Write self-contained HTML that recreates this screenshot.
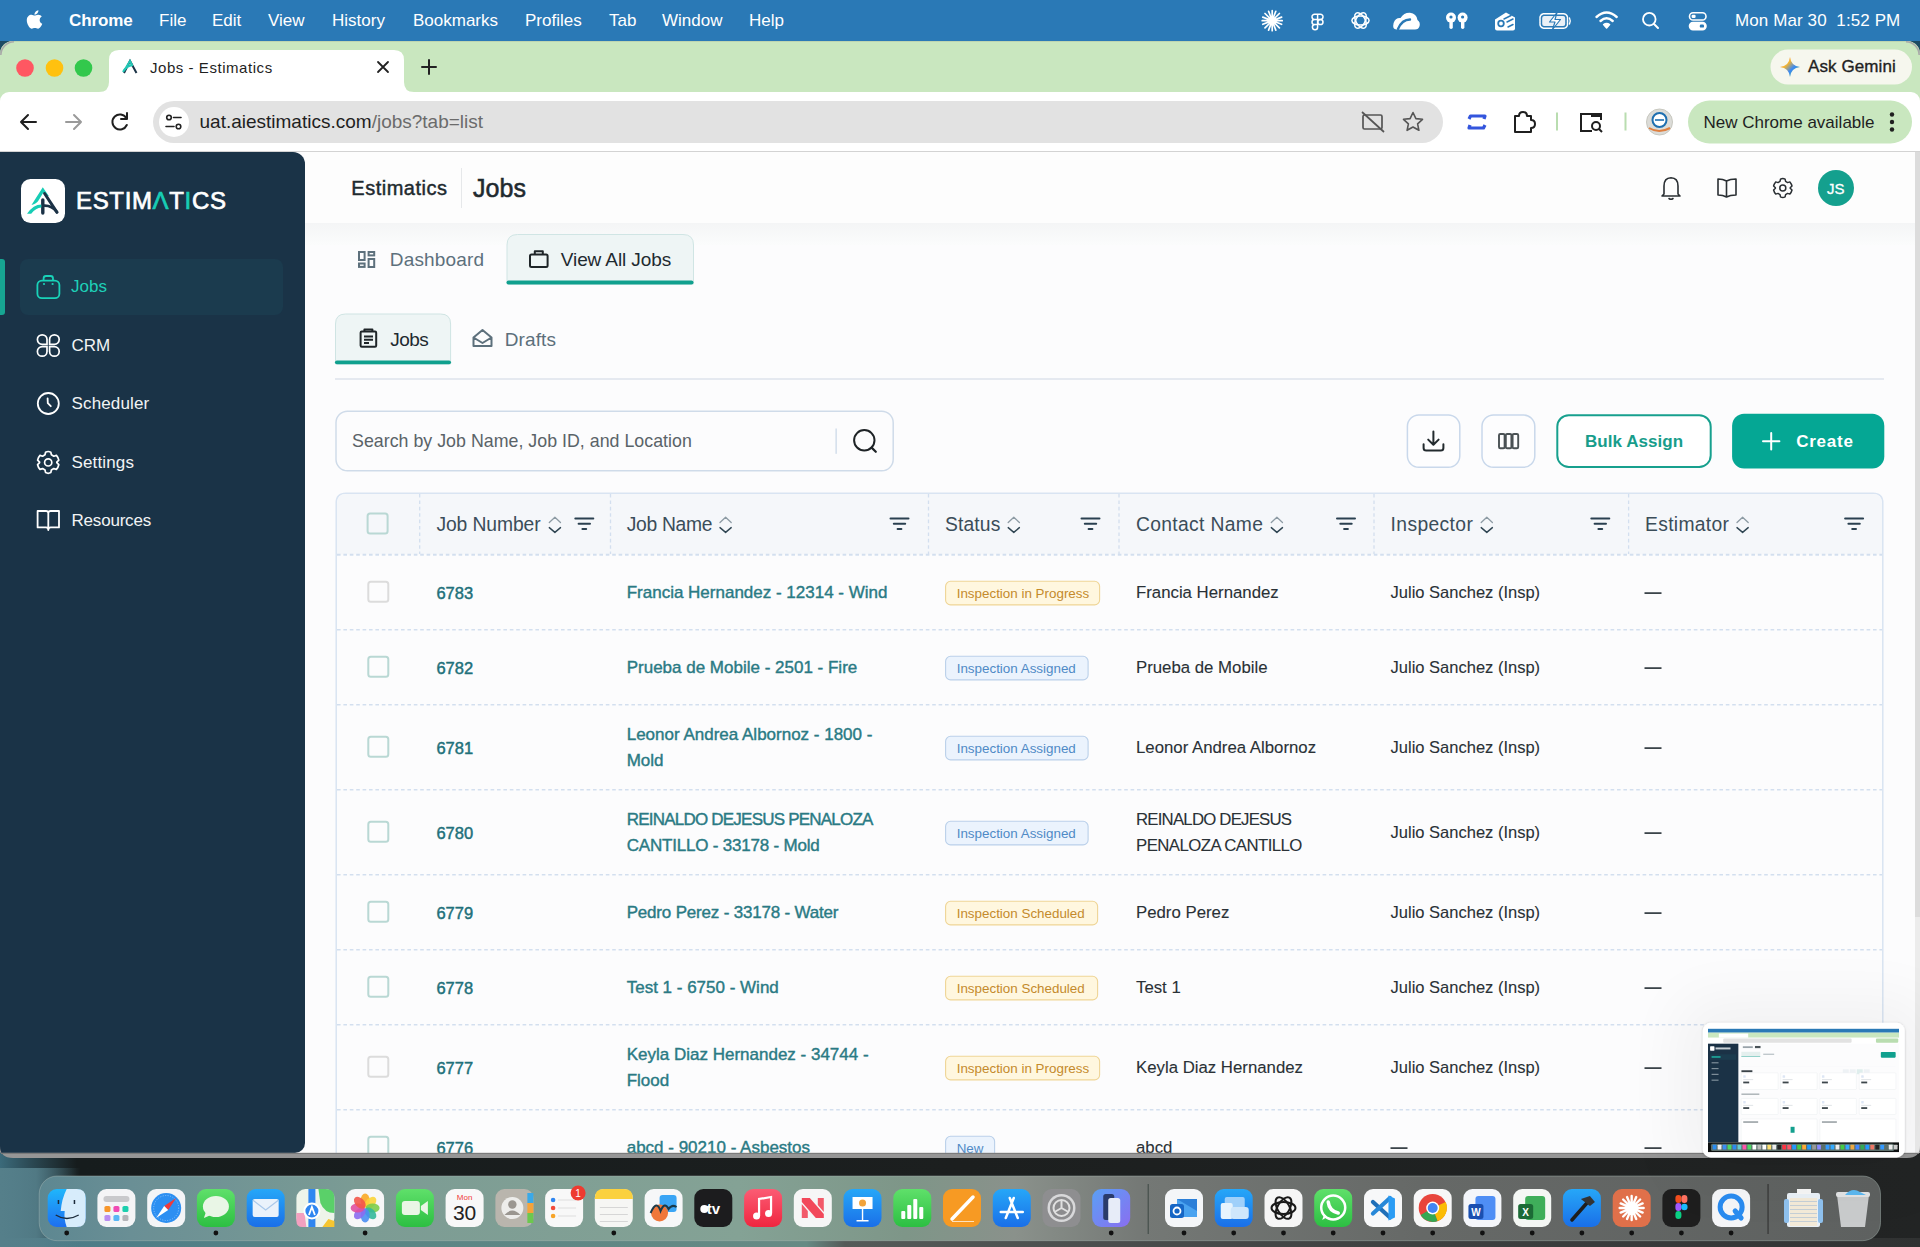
<!DOCTYPE html>
<html><head><meta charset="utf-8">
<style>
*{box-sizing:border-box;margin:0;padding:0}
html,body{width:1920px;height:1247px;overflow:hidden}
body{position:relative;font-family:"Liberation Sans",sans-serif;background:#1d4a63}
.a{position:absolute}
.t{position:absolute;white-space:nowrap;line-height:1}
svg.i{position:absolute;overflow:visible}
#desk{left:0;top:1060px;width:1920px;height:187px;background:linear-gradient(90deg,#4a7785 0%,#557d86 8%,#466f78 22%,#34494c 40%,#2b3132 55%,#232828 75%,#1d2121 100%)}
#menubar{left:0;top:0;width:1920px;height:41px;background:#2a79b6}
#menubar .t{font-size:17px;top:12px;color:#fff}
#winframe{left:0;top:92px;width:1920px;height:10px;background:#c9e7bf}
#tabstrip{left:0;top:41px;width:1920px;height:51px;background:#c9e7bf;border-radius:13px 13px 0 0;box-shadow:inset 0 1px 0 #bdd5b1}
#toolbar{left:0;top:92px;width:1920px;height:60px;background:#fff;border-bottom:1px solid #d3d3d3;border-radius:9px 9px 0 0}
#page{left:0;top:152px;width:1920px;height:1001px;background:#fcfcfd}
#sidebar{left:0;top:152px;width:305px;height:1001px;background:#1a3347;border-radius:0 12px 10px 0}
</style></head><body>
<!-- MENUBAR -->
<div id="menubar" class="a">
  <svg class="i" style="left:26px;top:9px" width="17" height="21" viewBox="0 0 384 512"><path fill="#fff" d="M318.7 268.7c-.2-36.7 16.4-64.4 50-84.8-18.8-26.9-47.2-41.7-84.7-44.6-35.5-2.8-74.3 20.7-88.5 20.7-15 0-49.4-19.7-76.4-19.7C63.3 141.2 4 184.8 4 273.5q0 39.3 14.4 81.2c12.8 36.7 59 126.7 107.2 125.2 25.2-.6 43-17.9 75.8-17.9 31.8 0 48.3 17.9 76.4 17.9 48.6-.7 90.4-82.5 102.6-119.3-65.2-30.7-61.7-90-61.7-91.9zm-56.6-164.2c27.3-32.4 24.8-61.9 24-72.5-24.1 1.4-52 16.4-67.9 34.9-17.5 19.8-27.8 44.3-25.6 71.9 26.1 2 49.9-11.4 69.5-34.3z"/></svg>
  <span class="t" style="left:69px;font-weight:bold;letter-spacing:-0.1px">Chrome</span>
  <span class="t" style="left:159px">File</span>
  <span class="t" style="left:212px">Edit</span>
  <span class="t" style="left:268px">View</span>
  <span class="t" style="left:332px">History</span>
  <span class="t" style="left:413px">Bookmarks</span>
  <span class="t" style="left:525px">Profiles</span>
  <span class="t" style="left:609px">Tab</span>
  <span class="t" style="left:662px">Window</span>
  <span class="t" style="left:749px">Help</span>
  <span class="t" style="left:1735px;letter-spacing:0.1px">Mon Mar 30&nbsp; 1:52 PM</span>
  <svg class="i" style="left:0;top:0" width="1920" height="41" fill="none" stroke="#fff" stroke-linecap="round">
    <g stroke-width="1.7" transform="translate(1272.2 20.7)">
      <path d="M0 -10 L0 10 M-10 0 L10 0 M-7.2 -7.2 L7.2 7.2 M-7.2 7.2 L7.2 -7.2 M-3.6 -9.4 L3.6 9.4 M-9.4 -3.6 L9.4 3.6 M-9.4 3.6 L9.4 -3.6 M-3.6 9.4 L3.6 -9.4"/>
    </g>
    <circle cx="1272.2" cy="20.7" r="2.5" fill="#fff" stroke="none"/>
    <g stroke-width="1.5">
      <path d="M1314.6 14.2 h3 v5.2 h-3 a2.6 2.6 0 0 1 0 -5.2 z M1317.6 14.2 h2.8 a2.6 2.6 0 0 1 0 5.2 h-2.8 z M1314.6 19.4 h3 v5.2 h-3 a2.6 2.6 0 0 1 0 -5.2 z M1314.6 24.6 h3 v2.6 a2.6 2.6 0 1 1 -3 -2.6 z"/>
      <circle cx="1320.4" cy="22" r="2.6"/>
    </g>
    <g transform="translate(1360.5 20.5)" stroke-width="1.5">
      <ellipse rx="8.6" ry="4.6"/><ellipse rx="8.6" ry="4.6" transform="rotate(60)"/><ellipse rx="8.6" ry="4.6" transform="rotate(120)"/>
    </g>
    <path d="M1396.5 29.5 Q1392 29.5 1393.6 23 Q1395.5 17.5 1400.5 18 Q1404 12.5 1410 12.8 Q1416.5 13.5 1417.5 20 Q1420.5 22 1419.6 26 Q1418.6 29.5 1415 29.5 Z" fill="#fff" stroke="none"/>
    <path d="M1398 29 Q1402 19.5 1410 19.5" stroke="#2a79b6" stroke-width="2.4"/>
    <g fill="#fff" stroke="none"><circle cx="1451" cy="17.6" r="5"/><rect x="1449.4" y="19" width="3.4" height="10" rx="1.7"/><circle cx="1462.6" cy="17.6" r="5"/><rect x="1461" y="19" width="3.4" height="10" rx="1.7"/></g>
    <circle cx="1451" cy="17" r="1.6" fill="#2a79b6" stroke="none"/><circle cx="1462.6" cy="17" r="1.6" fill="#2a79b6" stroke="none"/>
    <path d="M1495 19.5 L1506 12.5 L1515 17.5 L1515 28.5 Q1515 30.5 1513 30.5 L1497 30.5 Q1495 30.5 1495 28.5 Z" fill="#fff" stroke="none"/>
    <circle cx="1501" cy="23.5" r="2.8" stroke="#2a79b6" stroke-width="1.8"/>
    <path d="M1504 19 L1511 15.5 M1507 22 L1513 19 M1508 27 L1513 24.5" stroke="#2a79b6" stroke-width="1.5"/>
    <rect x="1540" y="13.8" width="27.5" height="14.4" rx="4" stroke-width="1.5" stroke-dasharray="2.2 0.6"/>
    <rect x="1542.2" y="16" width="23" height="10" rx="2" fill="#eaf0f6" stroke="none"/>
    <path d="M1557 12.5 L1549.5 22 L1555 22 L1552.5 29.5 L1560.5 19.5 L1555 19.5 Z" fill="#fff" stroke="#2a79b6" stroke-width="1.2" stroke-linejoin="round"/>
    <path d="M1569.5 18 Q1571 21 1569.5 24" stroke-width="1.4"/>
    <g stroke-width="2.4">
      <path d="M1596.5 17 Q1606.6 8 1616.7 17"/><path d="M1600.5 21 Q1606.6 15.5 1612.7 21"/>
    </g>
    <path d="M1603.6 24.6 Q1606.6 22.4 1609.6 24.6 L1606.6 28 Z" fill="#fff" stroke="#fff" stroke-width="1.5" stroke-linejoin="round"/>
    <circle cx="1649.3" cy="19.2" r="6.3" stroke-width="1.8"/><path d="M1654 24 L1658 28" stroke-width="2"/>
    <rect x="1689.5" y="12.8" width="16.5" height="7.2" rx="3.6" stroke-width="1.6"/><rect x="1691.6" y="14.8" width="4" height="3.2" rx="1.2" fill="#fff" stroke="none"/>
    <rect x="1689.5" y="22.6" width="16.5" height="7" rx="3.5" fill="#fff" stroke-width="1.6"/><rect x="1699.8" y="24.6" width="4.2" height="3" rx="1.2" fill="#2a79b6" stroke="none"/>
  </svg>
</div>
<!-- WINDOW -->
<div id="winframe" class="a"></div>
<div id="tabstrip" class="a"></div>
<div id="toolbar" class="a"></div>
<div id="page" class="a"></div>
<svg class="i" style="left:0;top:0" width="1920" height="60"><path d="M0.8 55 A13.5 13.5 0 0 1 14 41.8" fill="none" stroke="#a9a9a9" stroke-width="1.6"/><path d="M1906 41.8 A13.5 13.5 0 0 1 1919.2 55" fill="none" stroke="#a9a9a9" stroke-width="1.6"/></svg>
<div id="sidebar" class="a"></div>
<svg class="i" style="left:0;top:0" width="1920" height="160">
  <circle cx="25" cy="68" r="8.8" fill="#ff5762"/>
  <circle cx="54.5" cy="68" r="8.8" fill="#ffc10f"/>
  <circle cx="83.5" cy="68" r="8.8" fill="#32c84c"/>
  <path d="M99 92 Q109 92 109 82 L109 60 Q109 50 119 50 L394 50 Q404 50 404 60 L404 82 Q404 92 414 92 Z" fill="#fff"/>
  <!-- favicon -->
  <path d="M124 73 L130 61 L136.5 73" fill="none" stroke="#1b3246" stroke-width="2"/>
  <path d="M123 72 Q126 66 133 65" fill="none" stroke="#22c7b5" stroke-width="2"/>
  <path d="M124.5 70 L130 61 L132 65" fill="none" stroke="#22c7b5" stroke-width="2"/>
  <!-- close x -->
  <path d="M378 62 L388 72 M388 62 L378 72" stroke="#222" stroke-width="1.8" stroke-linecap="round"/>
  <!-- plus -->
  <path d="M429 60 L429 74 M422 67 L436 67" stroke="#222" stroke-width="2" stroke-linecap="round"/>
  <!-- gemini pill -->
  <rect x="1770.5" y="49.5" width="141.5" height="35" rx="17.5" fill="#f6f7ee"/>
  <defs><linearGradient id="gem" x1="0" y1="0" x2="1" y2="1"><stop offset="0" stop-color="#f25a3a"/><stop offset="0.35" stop-color="#f7b52c"/><stop offset="0.6" stop-color="#3c8af5"/><stop offset="1" stop-color="#37b34a"/></linearGradient></defs>
  <path d="M1790 57 Q1791 66 1800 67 Q1791 68 1790 77 Q1789 68 1780 67 Q1789 66 1790 57Z" fill="url(#gem)"/>
  <!-- toolbar -->
  <path d="M21 122 L36 122 M28 115 L21 122 L28 129" fill="none" stroke="#1f1f1f" stroke-width="2" stroke-linecap="round" stroke-linejoin="round"/>
  <path d="M66 122 L81 122 M74 115 L81 122 L74 129" fill="none" stroke="#9a9a9a" stroke-width="2" stroke-linecap="round" stroke-linejoin="round"/>
  <path d="M126.3 118 A7.5 7.5 0 1 0 126.8 125" fill="none" stroke="#1f1f1f" stroke-width="2" stroke-linecap="round"/>
  <path d="M127 113 L127 119 L121 119" fill="none" stroke="#1f1f1f" stroke-width="2" stroke-linecap="round" stroke-linejoin="round"/>
  <rect x="153" y="101" width="1290" height="42" rx="21" fill="#e2e2e2"/>
  <circle cx="174" cy="122" r="15" fill="#fff"/>
  <circle cx="169" cy="117.5" r="2.3" fill="none" stroke="#222" stroke-width="1.6"/>
  <path d="M173.5 117.5 L181 117.5 M166 126.5 L174 126.5" stroke="#222" stroke-width="1.6" stroke-linecap="round"/>
  <circle cx="178.5" cy="126.5" r="2.3" fill="none" stroke="#222" stroke-width="1.6"/>
  <!-- camera off -->
  <rect x="1363" y="115" width="19" height="14" rx="1.5" fill="none" stroke="#555" stroke-width="1.7"/>
  <path d="M1362 112 L1384 132" stroke="#555" stroke-width="1.7"/>
  <!-- star -->
  <path d="M1413 112.5 L1415.9 118.6 L1422.5 119.3 L1417.6 123.8 L1418.9 130.3 L1413 127 L1407.1 130.3 L1408.4 123.8 L1403.5 119.3 L1410.1 118.6 Z" fill="none" stroke="#555" stroke-width="1.6" stroke-linejoin="round"/>
  <!-- blue ext -->
  <path d="M1469 119 L1470.5 116 L1485 116 L1484 119 M1485 125 L1483.5 128 L1469 128 L1470 125" fill="none" stroke="#3355dd" stroke-width="3.2" stroke-linejoin="round"/>
  <!-- puzzle -->
  <path d="M1515 116 L1519 116 Q1519 112 1523 112 Q1527 112 1527 116 L1531 116 L1531 120 Q1535 120 1535 124 Q1535 128 1531 128 L1531 132 L1515 132 Z" fill="none" stroke="#1f1f1f" stroke-width="2" stroke-linejoin="round"/>
  <rect x="1556" y="112.5" width="2" height="18" fill="#b9ddb0"/>
  <!-- tab search -->
  <path d="M1592 131 L1581 131 L1581 114 L1601 114 L1601 120" fill="none" stroke="#1f1f1f" stroke-width="2"/>
  <rect x="1591" y="113" width="11" height="4" fill="#1f1f1f"/>
  <circle cx="1596" cy="126" r="4" fill="none" stroke="#1f1f1f" stroke-width="2"/>
  <path d="M1599 129 L1602 132" stroke="#1f1f1f" stroke-width="2"/>
  <rect x="1624.5" y="112.5" width="2" height="18" fill="#b9ddb0"/>
  <!-- avatar -->
  <circle cx="1659.5" cy="122" r="13" fill="#dcdcd8"/>
  <circle cx="1659.5" cy="122" r="13" fill="none" stroke="#c8c8c0" stroke-width="1"/>
  <circle cx="1659.5" cy="120" r="7" fill="#fff" stroke="#1e6fb0" stroke-width="2"/>
  <path d="M1655 120 L1664 120" stroke="#1e6fb0" stroke-width="1.6"/>
  <path d="M1649 128 Q1659 134 1670 128" stroke="#e08040" stroke-width="2" fill="none"/>
  <!-- new chrome pill -->
  <rect x="1688" y="100.5" width="224" height="43" rx="21.5" fill="#c9e7bf"/>
  <circle cx="1892" cy="114.5" r="2.2" fill="#1f1f1f"/>
  <circle cx="1892" cy="122" r="2.2" fill="#1f1f1f"/>
  <circle cx="1892" cy="129.5" r="2.2" fill="#1f1f1f"/>
</svg>
<span class="t" style="left:150px;top:60px;font-size:15px;letter-spacing:0.55px;color:#1f1f1f">Jobs - Estimatics</span>
<span class="t" style="left:1808px;top:58px;font-size:17px;color:#1f1f1f;-webkit-text-stroke:0.35px #1f1f1f;letter-spacing:0.1px">Ask Gemini</span>
<span class="t" style="left:199.5px;top:111.8px;font-size:19px;color:#1f1f1f"><span>uat.aiestimatics.com</span><span style="color:#6b6b6b">/jobs?tab=list</span></span>
<span class="t" style="left:1703.5px;top:113.5px;font-size:17px;color:#1f1f1f;letter-spacing:0px">New Chrome available</span>
<svg class="i" style="left:0;top:0" width="320" height="560">
  <rect x="21" y="179" width="44" height="44" rx="9.5" fill="#fff"/>
  <path d="M31.5 205 L42.8 187.2 L48.8 196 L46 196.5 L43.2 192.8 L38.5 200.5 Q36.5 203.5 31.5 205 Z" fill="#17cdb5"/>
  <path d="M44.6 193.5 L57 212.3" stroke="#1b3246" stroke-width="3" stroke-linecap="round"/>
  <path d="M42.8 200 L42.8 213" stroke="#1b3246" stroke-width="3.4" stroke-linecap="round"/>
  <path d="M27 213.8 Q33.5 204.6 41.3 204.6 L41.3 207.6 Q36 207.8 31.2 213.8 Z" fill="#17cdb5"/>
  <path d="M44.5 205.6 Q52 205.5 57 212" fill="none" stroke="#1b3246" stroke-width="2.6" stroke-linecap="round"/>
  <!-- active nav -->
  <rect x="20" y="259" width="263" height="56" rx="8" fill="#1b3b4e"/>
  <rect x="-3" y="259" width="8" height="56" rx="3" fill="#17a592"/>
  <!-- briefcase -->
  <g fill="none" stroke="#19d2b8" stroke-width="1.8">
    <rect x="37.4" y="280.6" width="22" height="17.6" rx="4.5"/>
    <path d="M43.6 280.6 L43.6 278.5 Q43.6 276 46 276 L50.6 276 Q53 276 53 278.5 L53 280.6"/>
  </g>
  <circle cx="44" cy="284" r="1.1" fill="#19d2b8"/><circle cx="52.6" cy="284" r="1.1" fill="#19d2b8"/>
  <!-- crm -->
  <g fill="none" stroke="#fff" stroke-width="1.7">
    <path d="M47 344.4 L42.2 344.4 A4.8 4.8 0 1 1 47 339.6 Z"/>
    <path d="M49.6 344.4 L54.4 344.4 A4.8 4.8 0 1 0 49.6 339.6 Z"/>
    <path d="M47 346.6 L42.2 346.6 A4.8 4.8 0 1 0 47 351.4 Z"/>
    <path d="M49.6 346.6 L54.4 346.6 A4.8 4.8 0 1 1 49.6 351.4 Z"/>
  </g>
  <!-- clock -->
  <g fill="none" stroke="#fff" stroke-width="1.8" stroke-linecap="round">
    <circle cx="48.3" cy="403.5" r="10.5"/>
    <path d="M47.6 398.4 L47.8 403.2 L50.8 406.2"/>
  </g>
  <!-- gear -->
  <g fill="none" stroke="#fff" stroke-width="1.7" stroke-linejoin="round" transform="translate(48.2 462.4)">
    <path d="M-2.6 -10.2 Q0 -11.6 2.6 -10.2 L3.2 -7.6 L5.6 -6.2 L8.2 -7 Q10 -5 10.6 -2.3 L8.6 -0.2 L8.6 0.2 L10.6 2.3 Q10 5 8.2 7 L5.6 6.2 L3.2 7.6 L2.6 10.2 Q0 11.6 -2.6 10.2 L-3.2 7.6 L-5.6 6.2 L-8.2 7 Q-10 5 -10.6 2.3 L-8.6 0.2 L-8.6 -0.2 L-10.6 -2.3 Q-10 -5 -8.2 -7 L-5.6 -6.2 L-3.2 -7.6 Z"/>
    <circle r="3.6"/>
  </g>
  <!-- book -->
  <g fill="none" stroke="#fff" stroke-width="1.8" stroke-linejoin="round">
    <path d="M48.3 513.3 Q48.3 511 46 511 L37.6 511 L37.6 527.4 L46 527.4 Q48.3 527.4 48.3 530 Q48.3 527.4 50.6 527.4 L59 527.4 L59 511 L50.6 511 Q48.3 511 48.3 513.3 L48.3 527.4"/>
  </g>
</svg>
<span class="t" style="left:76px;top:189.2px;font-size:24px;-webkit-text-stroke:0.7px currentColor;letter-spacing:0.65px;color:#fff">ESTIM<span style="color:#17cdb5">Λ</span>T<span style="color:#17cdb5">I</span>CS</span>
<span class="t" style="left:71px;top:278.3px;font-size:17px;color:#1ed0b8">Jobs</span>
<span class="t" style="left:71.5px;top:336.8px;font-size:17px;color:#f2f4f5">CRM</span>
<span class="t" style="left:71.5px;top:395.3px;font-size:17px;color:#f2f4f5;letter-spacing:0.15px">Scheduler</span>
<span class="t" style="left:71.5px;top:453.8px;font-size:17px;color:#f2f4f5;letter-spacing:0.15px">Settings</span>
<span class="t" style="left:71.5px;top:512.3px;font-size:17px;color:#f2f4f5;letter-spacing:-0.2px">Resources</span>
<div class="a" style="left:305px;top:152px;width:1610px;height:71px;background:#fdfdfd"></div>
<div class="a" style="left:305px;top:223px;width:1610px;height:22px;background:linear-gradient(#f4f5f6,#fbfcfc)"></div>
<div class="a" style="left:1915px;top:152px;width:5px;height:765px;background:#dcdcdc"></div><div class="a" style="left:1915px;top:917px;width:5px;height:236px;background:#ececec"></div>
<span class="t" style="left:351.3px;top:177.8px;font-size:20px;color:#1f2a2f;-webkit-text-stroke:0.45px currentColor;letter-spacing:0.5px">Estimatics</span>
<div class="a" style="left:461px;top:168px;width:1px;height:40px;background:#e6e8ea"></div>
<span class="t" style="left:473px;top:175.6px;font-size:25px;color:#1f2a2f;-webkit-text-stroke:0.55px currentColor;letter-spacing:0.1px">Jobs</span>
<svg class="i" style="left:0;top:0" width="1920" height="400">
  <!-- header icons -->
  <g fill="none" stroke="#2a2f33" stroke-width="1.6" stroke-linecap="round" stroke-linejoin="round">
    <path d="M1664 194 L1664 186 Q1664 178 1671 177.8 Q1678 178 1678 186 L1678 194 L1680 196 L1662 196 Z"/>
    <path d="M1669 198.5 Q1671 200 1673 198.5"/>
    <path d="M1726.5 181 Q1723 179 1718 179 L1718 195 Q1723 195 1726.5 197 Q1730 195 1736 195 L1736 179 Q1730 179 1726.5 181 Z M1726.5 181 L1726.5 197"/>
  </g>
  <g fill="none" stroke="#2a2f33" stroke-width="1.5" stroke-linejoin="round" transform="translate(1782.8 188)">
    <path d="M-2.3 -8.8 Q0 -10 2.3 -8.8 L2.8 -6.6 L4.8 -5.4 L7.1 -6.1 Q8.6 -4.3 9.2 -2 L7.4 -0.2 L7.4 0.2 L9.2 2 Q8.6 4.3 7.1 6.1 L4.8 5.4 L2.8 6.6 L2.3 8.8 Q0 10 -2.3 8.8 L-2.8 6.6 L-4.8 5.4 L-7.1 6.1 Q-8.6 4.3 -9.2 2 L-7.4 0.2 L-7.4 -0.2 L-9.2 -2 Q-8.6 -4.3 -7.1 -6.1 L-4.8 -5.4 L-2.8 -6.6 Z"/>
    <circle r="3"/>
  </g>
  <circle cx="1836" cy="188" r="18" fill="#14a08e"/>
  <!-- Dashboard icon -->
  <g fill="none" stroke="#5d707c" stroke-width="2">
    <rect x="359" y="252" width="5.6" height="8"/><rect x="359" y="263.5" width="5.6" height="3.4"/>
    <rect x="368.6" y="252" width="5.6" height="3.4"/><rect x="368.6" y="259" width="5.6" height="8"/>
  </g>
  <!-- View all jobs tab -->
  <path d="M507 284 L507 245 Q507 234.5 517.5 234.5 L683 234.5 Q693.5 234.5 693.5 245 L693.5 284 Z" fill="#eef5f5" stroke="#d0e5e4" stroke-width="1"/>
  <rect x="506.5" y="280.5" width="187" height="4" rx="2" fill="#10a08e"/>
  <g fill="none" stroke="#1e2528" stroke-width="2" stroke-linejoin="round">
    <rect x="530" y="254.5" width="17.6" height="12.6" rx="1.5"/>
    <path d="M534.8 254.5 L534.8 251.2 L542.8 251.2 L542.8 254.5"/>
  </g>
  <!-- Jobs / drafts tabs -->
  <path d="M335.5 364 L335.5 324 Q335.5 314 345.5 314 L440.6 314 Q450.6 314 450.6 324 L450.6 364 Z" fill="#eef5f5" stroke="#cfe4e3" stroke-width="1"/>
  <rect x="335" y="360.4" width="116" height="3.8" rx="1.9" fill="#10a08e"/>
  <g fill="none" stroke="#1e2528" stroke-width="2" stroke-linejoin="round">
    <rect x="360.6" y="331.6" width="15.6" height="15.2" rx="1.2"/>
    <path d="M364.4 331.6 L364.4 329.6 L372.4 329.6 L372.4 331.6"/>
    <path d="M364 336.6 L373 336.6 M364 339.8 L373 339.8 M364 343 L369 343"/>
  </g>
  <g fill="none" stroke="#5d707c" stroke-width="2" stroke-linejoin="round">
    <path d="M473.5 337.5 L482.5 330 L491.5 337.5 L491.5 346 L473.5 346 Z M473.5 337.5 L482.5 343 L491.5 337.5"/>
  </g>
  <rect x="335" y="378" width="1549" height="2" fill="#e5e9f0"/>
</svg>
<span class="t" style="left:1827px;top:180.5px;font-size:15px;color:#fff;-webkit-text-stroke:0.3px #fff">JS</span>
<span class="t" style="left:389.8px;top:249.8px;font-size:19px;color:#5d707c;letter-spacing:0.15px">Dashboard</span>
<span class="t" style="left:560.8px;top:249.8px;font-size:19px;color:#1e2a30;letter-spacing:-0.1px">View All Jobs</span>
<span class="t" style="left:390.2px;top:330px;font-size:19px;color:#1e2a30;letter-spacing:-0.5px">Jobs</span>
<span class="t" style="left:504.8px;top:330px;font-size:19px;color:#5b6f7b;letter-spacing:0.1px">Drafts</span>
<!--TABLE-->
<svg class="i" style="left:0;top:0" width="1920" height="1247"><path d="M336.2 1160 L336.2 503 Q336.2 493.2 346 493.2 L1873 493.2 Q1882.8 493.2 1882.8 503 L1882.8 1160" fill="#fcfcfd" stroke="#d9e4f2" stroke-width="1.5"/>
<path d="M337 554.5 L337 503.5 Q337 494 346.5 494 L1872.5 494 Q1882 494 1882 503.5 L1882 554.5 Z" fill="#f5f7fa"/>
<path d="M337 554.8 L1882 554.8" stroke="#d3dfef" stroke-width="2" stroke-dasharray="3.6 2.8"/>
<path d="M419.7 494 L419.7 554" stroke="#d3dfef" stroke-width="1.3" stroke-dasharray="3.6 2.8"/>
<path d="M610.5 494 L610.5 554" stroke="#d3dfef" stroke-width="1.3" stroke-dasharray="3.6 2.8"/>
<path d="M928.5 494 L928.5 554" stroke="#d3dfef" stroke-width="1.3" stroke-dasharray="3.6 2.8"/>
<path d="M1119 494 L1119 554" stroke="#d3dfef" stroke-width="1.3" stroke-dasharray="3.6 2.8"/>
<path d="M1374 494 L1374 554" stroke="#d3dfef" stroke-width="1.3" stroke-dasharray="3.6 2.8"/>
<path d="M1628.6 494 L1628.6 554" stroke="#d3dfef" stroke-width="1.3" stroke-dasharray="3.6 2.8"/>
<path d="M337 629.8 L1882 629.8" stroke="#d3dfef" stroke-width="1.6" stroke-dasharray="3.6 2.8"/>
<path d="M337 704.8 L1882 704.8" stroke="#d3dfef" stroke-width="1.6" stroke-dasharray="3.6 2.8"/>
<path d="M337 789.8 L1882 789.8" stroke="#d3dfef" stroke-width="1.6" stroke-dasharray="3.6 2.8"/>
<path d="M337 874.8 L1882 874.8" stroke="#d3dfef" stroke-width="1.6" stroke-dasharray="3.6 2.8"/>
<path d="M337 949.8 L1882 949.8" stroke="#d3dfef" stroke-width="1.6" stroke-dasharray="3.6 2.8"/>
<path d="M337 1024.8 L1882 1024.8" stroke="#d3dfef" stroke-width="1.6" stroke-dasharray="3.6 2.8"/>
<path d="M337 1109.8 L1882 1109.8" stroke="#d3dfef" stroke-width="1.6" stroke-dasharray="3.6 2.8"/>
<rect x="367.6" y="513.6" width="20" height="20" rx="2.5" fill="none" stroke="#b9d8d4" stroke-width="2"/>
<rect x="368.3" y="581.7" width="20" height="20" rx="2.5" fill="none" stroke="#dcdcdc" stroke-width="2"/>
<rect x="1644.5" y="592.3" width="17" height="1.6" fill="#263036"/>
<rect x="945.6" y="581.3" width="154" height="23.6" rx="5" fill="#fff7df" stroke="#efd596" stroke-width="1.1"/>
<rect x="368.3" y="656.7" width="20" height="20" rx="2.5" fill="none" stroke="#b9d8d4" stroke-width="2"/>
<rect x="1644.5" y="667.3" width="17" height="1.6" fill="#263036"/>
<rect x="945.6" y="656.3" width="142.5" height="23.6" rx="5" fill="#ebf3fd" stroke="#bad0ea" stroke-width="1.1"/>
<rect x="368.3" y="736.7" width="20" height="20" rx="2.5" fill="none" stroke="#b9d8d4" stroke-width="2"/>
<rect x="1644.5" y="747.3" width="17" height="1.6" fill="#263036"/>
<rect x="945.6" y="736.3" width="142.5" height="23.6" rx="5" fill="#ebf3fd" stroke="#bad0ea" stroke-width="1.1"/>
<rect x="368.3" y="821.7" width="20" height="20" rx="2.5" fill="none" stroke="#b9d8d4" stroke-width="2"/>
<rect x="1644.5" y="832.3" width="17" height="1.6" fill="#263036"/>
<rect x="945.6" y="821.3" width="142.5" height="23.6" rx="5" fill="#ebf3fd" stroke="#bad0ea" stroke-width="1.1"/>
<rect x="368.3" y="901.7" width="20" height="20" rx="2.5" fill="none" stroke="#b9d8d4" stroke-width="2"/>
<rect x="1644.5" y="912.3" width="17" height="1.6" fill="#263036"/>
<rect x="945.6" y="901.3" width="152" height="23.6" rx="5" fill="#fff7df" stroke="#efd596" stroke-width="1.1"/>
<rect x="368.3" y="976.7" width="20" height="20" rx="2.5" fill="none" stroke="#b9d8d4" stroke-width="2"/>
<rect x="1644.5" y="987.3" width="17" height="1.6" fill="#263036"/>
<rect x="945.6" y="976.3" width="152" height="23.6" rx="5" fill="#fff7df" stroke="#efd596" stroke-width="1.1"/>
<rect x="368.3" y="1056.7" width="20" height="20" rx="2.5" fill="none" stroke="#dcdcdc" stroke-width="2"/>
<rect x="1644.5" y="1067.3" width="17" height="1.6" fill="#263036"/>
<rect x="945.6" y="1056.3" width="154" height="23.6" rx="5" fill="#fff7df" stroke="#efd596" stroke-width="1.1"/>
<rect x="368.3" y="1136.7" width="20" height="20" rx="2.5" fill="none" stroke="#b9d8d4" stroke-width="2"/>
<rect x="1390.5" y="1147.3" width="17" height="1.6" fill="#263036"/>
<rect x="1644.5" y="1147.3" width="17" height="1.6" fill="#263036"/>
<rect x="945.6" y="1136.3" width="49" height="23.6" rx="5" fill="#ebf3fd" stroke="#bad0ea" stroke-width="1.1"/></svg>
<span class="t" style="left:436.4px;top:584.5px;font-size:16.5px;color:#21707a;-webkit-text-stroke:0.45px currentColor">6783</span>
<span class="t" style="left:626.7px;top:583.8px;font-size:17px;color:#2a7a84;-webkit-text-stroke:0.4px currentColor;letter-spacing:0px">Francia Hernandez - 12314 - Wind</span>
<span class="t" style="left:1136px;top:585.0px;font-size:16.8px;color:#2a3136;-webkit-text-stroke:0.1px currentColor;letter-spacing:0px">Francia Hernandez</span>
<span class="t" style="left:1390.6px;top:583.9px;font-size:16.5px;color:#2a3136;-webkit-text-stroke:0.1px currentColor">Julio Sanchez (Insp)</span>
<span class="t" style="left:956.7px;top:587.2px;font-size:13.4px;color:#c48a2c;">Inspection in Progress</span>
<span class="t" style="left:436.4px;top:659.5px;font-size:16.5px;color:#21707a;-webkit-text-stroke:0.45px currentColor">6782</span>
<span class="t" style="left:626.7px;top:658.8px;font-size:17px;color:#2a7a84;-webkit-text-stroke:0.4px currentColor;letter-spacing:0px">Prueba de Mobile - 2501 - Fire</span>
<span class="t" style="left:1136px;top:660.0px;font-size:16.8px;color:#2a3136;-webkit-text-stroke:0.1px currentColor;letter-spacing:0px">Prueba de Mobile</span>
<span class="t" style="left:1390.6px;top:658.9px;font-size:16.5px;color:#2a3136;-webkit-text-stroke:0.1px currentColor">Julio Sanchez (Insp)</span>
<span class="t" style="left:956.7px;top:662.2px;font-size:13.4px;color:#4f8ac6;">Inspection Assigned</span>
<span class="t" style="left:436.4px;top:739.5px;font-size:16.5px;color:#21707a;-webkit-text-stroke:0.45px currentColor">6781</span>
<span class="t" style="left:626.7px;top:725.6px;font-size:17px;color:#2a7a84;-webkit-text-stroke:0.4px currentColor;letter-spacing:0px">Leonor Andrea Albornoz - 1800 -</span>
<span class="t" style="left:626.7px;top:752.0px;font-size:17px;color:#2a7a84;-webkit-text-stroke:0.4px currentColor;letter-spacing:0px">Mold</span>
<span class="t" style="left:1136px;top:740.0px;font-size:16.8px;color:#2a3136;-webkit-text-stroke:0.1px currentColor;letter-spacing:0px">Leonor Andrea Albornoz</span>
<span class="t" style="left:1390.6px;top:738.9px;font-size:16.5px;color:#2a3136;-webkit-text-stroke:0.1px currentColor">Julio Sanchez (Insp)</span>
<span class="t" style="left:956.7px;top:742.2px;font-size:13.4px;color:#4f8ac6;">Inspection Assigned</span>
<span class="t" style="left:436.4px;top:824.5px;font-size:16.5px;color:#21707a;-webkit-text-stroke:0.45px currentColor">6780</span>
<span class="t" style="left:626.7px;top:810.6px;font-size:17px;color:#2a7a84;-webkit-text-stroke:0.4px currentColor;letter-spacing:-0.78px">REINALDO DEJESUS PENALOZA</span>
<span class="t" style="left:626.7px;top:837.0px;font-size:17px;color:#2a7a84;-webkit-text-stroke:0.4px currentColor;letter-spacing:-0.2px">CANTILLO - 33178 - Mold</span>
<span class="t" style="left:1136px;top:811.8px;font-size:16.8px;color:#2a3136;-webkit-text-stroke:0.1px currentColor;letter-spacing:-0.79px">REINALDO DEJESUS</span>
<span class="t" style="left:1136px;top:838.2px;font-size:16.8px;color:#2a3136;-webkit-text-stroke:0.1px currentColor;letter-spacing:-0.56px">PENALOZA CANTILLO</span>
<span class="t" style="left:1390.6px;top:823.9px;font-size:16.5px;color:#2a3136;-webkit-text-stroke:0.1px currentColor">Julio Sanchez (Insp)</span>
<span class="t" style="left:956.7px;top:827.2px;font-size:13.4px;color:#4f8ac6;">Inspection Assigned</span>
<span class="t" style="left:436.4px;top:904.5px;font-size:16.5px;color:#21707a;-webkit-text-stroke:0.45px currentColor">6779</span>
<span class="t" style="left:626.7px;top:903.8px;font-size:17px;color:#2a7a84;-webkit-text-stroke:0.4px currentColor;letter-spacing:-0.19px">Pedro Perez - 33178 - Water</span>
<span class="t" style="left:1136px;top:905.0px;font-size:16.8px;color:#2a3136;-webkit-text-stroke:0.1px currentColor;letter-spacing:0px">Pedro Perez</span>
<span class="t" style="left:1390.6px;top:903.9px;font-size:16.5px;color:#2a3136;-webkit-text-stroke:0.1px currentColor">Julio Sanchez (Insp)</span>
<span class="t" style="left:956.7px;top:907.2px;font-size:13.4px;color:#c48a2c;">Inspection Scheduled</span>
<span class="t" style="left:436.4px;top:979.5px;font-size:16.5px;color:#21707a;-webkit-text-stroke:0.45px currentColor">6778</span>
<span class="t" style="left:626.7px;top:978.8px;font-size:17px;color:#2a7a84;-webkit-text-stroke:0.4px currentColor;letter-spacing:0px">Test 1 - 6750 - Wind</span>
<span class="t" style="left:1136px;top:980.0px;font-size:16.8px;color:#2a3136;-webkit-text-stroke:0.1px currentColor;letter-spacing:0px">Test 1</span>
<span class="t" style="left:1390.6px;top:978.9px;font-size:16.5px;color:#2a3136;-webkit-text-stroke:0.1px currentColor">Julio Sanchez (Insp)</span>
<span class="t" style="left:956.7px;top:982.2px;font-size:13.4px;color:#c48a2c;">Inspection Scheduled</span>
<span class="t" style="left:436.4px;top:1059.5px;font-size:16.5px;color:#21707a;-webkit-text-stroke:0.45px currentColor">6777</span>
<span class="t" style="left:626.7px;top:1045.6px;font-size:17px;color:#2a7a84;-webkit-text-stroke:0.4px currentColor;letter-spacing:0px">Keyla Diaz Hernandez - 34744 -</span>
<span class="t" style="left:626.7px;top:1072.0px;font-size:17px;color:#2a7a84;-webkit-text-stroke:0.4px currentColor;letter-spacing:0px">Flood</span>
<span class="t" style="left:1136px;top:1060.0px;font-size:16.8px;color:#2a3136;-webkit-text-stroke:0.1px currentColor;letter-spacing:0px">Keyla Diaz Hernandez</span>
<span class="t" style="left:1390.6px;top:1058.9px;font-size:16.5px;color:#2a3136;-webkit-text-stroke:0.1px currentColor">Julio Sanchez (Insp)</span>
<span class="t" style="left:956.7px;top:1062.2px;font-size:13.4px;color:#c48a2c;">Inspection in Progress</span>
<span class="t" style="left:436.4px;top:1139.5px;font-size:16.5px;color:#21707a;-webkit-text-stroke:0.45px currentColor">6776</span>
<span class="t" style="left:626.7px;top:1138.8px;font-size:17px;color:#2a7a84;-webkit-text-stroke:0.4px currentColor;letter-spacing:0px">abcd - 90210 - Asbestos</span>
<span class="t" style="left:1136px;top:1140.0px;font-size:16.8px;color:#2a3136;-webkit-text-stroke:0.1px currentColor;letter-spacing:0px">abcd</span>
<span class="t" style="left:956.7px;top:1142.2px;font-size:13.4px;color:#4f8ac6;">New</span>
<!--/TABLE-->
<!--TOOLBAR-->
<svg class="i" style="left:0;top:0" width="1920" height="1247"><rect x="336" y="411.2" width="557.2" height="59.6" rx="11.5" fill="#fcfcfd" stroke="#cfdbe9" stroke-width="1.5"/>
<rect x="835.4" y="428.5" width="1.5" height="25.3" fill="#d3deeb"/>
<circle cx="864.3" cy="440.3" r="10.2" fill="none" stroke="#1e2326" stroke-width="2"/>
<path d="M871.6 447.6 L875.8 451.8" stroke="#1e2326" stroke-width="2.2" stroke-linecap="round"/>
<rect x="1407.4" y="414.9" width="52.4" height="52.4" rx="11.5" fill="#fdfdfe" stroke="#c9d8eb" stroke-width="1.5"/>
<g fill="none" stroke="#222a2e" stroke-width="2" stroke-linecap="round" stroke-linejoin="round"><path d="M1433.4 431.6 L1433.4 444.6 M1428.2 439.6 L1433.4 444.8 L1438.6 439.6"/><path d="M1423.6 444.2 L1423.6 448 Q1423.6 450.6 1426.2 450.6 L1440.8 450.6 Q1443.4 450.6 1443.4 448 L1443.4 444.2"/></g>
<rect x="1482" y="414.9" width="52.8" height="52.4" rx="11.5" fill="#fdfdfe" stroke="#c9d8eb" stroke-width="1.5"/>
<g fill="none" stroke="#4a5154" stroke-width="1.9"><rect x="1499" y="434" width="5.6" height="14.2" rx="1.3"/><rect x="1505.8" y="434" width="5.6" height="14.2" rx="1.3"/><rect x="1512.6" y="434" width="5.6" height="14.2" rx="1.3"/></g>
<rect x="1557.3" y="415.2" width="153.4" height="51.8" rx="11.5" fill="#fff" stroke="#17a08e" stroke-width="2"/>
<rect x="1732.1" y="413.8" width="152.2" height="54.7" rx="12" fill="#05a794"/>
<path d="M1771.2 433 L1771.2 449.4 M1763 441.2 L1779.4 441.2" stroke="#fff" stroke-width="2" stroke-linecap="round"/>
<path d="M549.3 522.5 L554.9 517.3 L560.5 522.5" fill="none" stroke="#8d9ba4" stroke-width="1.3" stroke-linecap="round" stroke-linejoin="round"/>
<path d="M549.3 527.6 L554.9 532.4 L560.5 527.6" fill="none" stroke="#2f4552" stroke-width="1.4" stroke-linecap="round" stroke-linejoin="round"/>
<path d="M575.3 518.4 L593.3 518.4 M578.5999999999999 523.8 L590.0 523.8 M582.4 529.1 L586.1999999999999 529.1" stroke="#2a4050" stroke-width="2" stroke-linecap="round"/>
<path d="M720 522.5 L725.6 517.3 L731.2 522.5" fill="none" stroke="#8d9ba4" stroke-width="1.3" stroke-linecap="round" stroke-linejoin="round"/>
<path d="M720 527.6 L725.6 532.4 L731.2 527.6" fill="none" stroke="#2f4552" stroke-width="1.4" stroke-linecap="round" stroke-linejoin="round"/>
<path d="M890.5 518.4 L908.5 518.4 M893.8 523.8 L905.2 523.8 M897.6 529.1 L901.4 529.1" stroke="#2a4050" stroke-width="2" stroke-linecap="round"/>
<path d="M1008.2 522.5 L1013.8000000000001 517.3 L1019.4000000000001 522.5" fill="none" stroke="#8d9ba4" stroke-width="1.3" stroke-linecap="round" stroke-linejoin="round"/>
<path d="M1008.2 527.6 L1013.8000000000001 532.4 L1019.4000000000001 527.6" fill="none" stroke="#2f4552" stroke-width="1.4" stroke-linecap="round" stroke-linejoin="round"/>
<path d="M1081.5 518.4 L1099.5 518.4 M1084.8 523.8 L1096.2 523.8 M1088.6 529.1 L1092.4 529.1" stroke="#2a4050" stroke-width="2" stroke-linecap="round"/>
<path d="M1271.3 522.5 L1276.8999999999999 517.3 L1282.5 522.5" fill="none" stroke="#8d9ba4" stroke-width="1.3" stroke-linecap="round" stroke-linejoin="round"/>
<path d="M1271.3 527.6 L1276.8999999999999 532.4 L1282.5 527.6" fill="none" stroke="#2f4552" stroke-width="1.4" stroke-linecap="round" stroke-linejoin="round"/>
<path d="M1337.0 518.4 L1355.0 518.4 M1340.3 523.8 L1351.7 523.8 M1344.1 529.1 L1347.9 529.1" stroke="#2a4050" stroke-width="2" stroke-linecap="round"/>
<path d="M1481.2 522.5 L1486.8 517.3 L1492.4 522.5" fill="none" stroke="#8d9ba4" stroke-width="1.3" stroke-linecap="round" stroke-linejoin="round"/>
<path d="M1481.2 527.6 L1486.8 532.4 L1492.4 527.6" fill="none" stroke="#2f4552" stroke-width="1.4" stroke-linecap="round" stroke-linejoin="round"/>
<path d="M1591.3 518.4 L1609.3 518.4 M1594.6 523.8 L1606.0 523.8 M1598.3999999999999 529.1 L1602.2 529.1" stroke="#2a4050" stroke-width="2" stroke-linecap="round"/>
<path d="M1737 522.5 L1742.6 517.3 L1748.2 522.5" fill="none" stroke="#8d9ba4" stroke-width="1.3" stroke-linecap="round" stroke-linejoin="round"/>
<path d="M1737 527.6 L1742.6 532.4 L1748.2 527.6" fill="none" stroke="#2f4552" stroke-width="1.4" stroke-linecap="round" stroke-linejoin="round"/>
<path d="M1845.1 518.4 L1863.1 518.4 M1848.3999999999999 523.8 L1859.8 523.8 M1852.1999999999998 529.1 L1856.0 529.1" stroke="#2a4050" stroke-width="2" stroke-linecap="round"/></svg>
<span class="t" style="left:352px;top:432.5px;font-size:17.8px;color:#5a6368;letter-spacing:0.02px">Search by Job Name, Job ID, and Location</span>
<span class="t" style="left:1585px;top:432.7px;font-size:17px;color:#179d8b;font-weight:bold;letter-spacing:0.05px">Bulk Assign</span>
<span class="t" style="left:1796.2px;top:432.6px;font-size:17px;color:#fff;font-weight:bold;letter-spacing:0.75px">Create</span>
<span class="t" style="left:436.4px;top:515.3px;font-size:19.3px;color:#3b4d59;letter-spacing:-0.09px">Job Number</span>
<span class="t" style="left:626.7px;top:515.3px;font-size:19.3px;color:#3b4d59;letter-spacing:-0.31px">Job Name</span>
<span class="t" style="left:945px;top:515.3px;font-size:19.3px;color:#3b4d59;letter-spacing:0.13px">Status</span>
<span class="t" style="left:1136px;top:515.3px;font-size:19.3px;color:#3b4d59;letter-spacing:0.33px">Contact Name</span>
<span class="t" style="left:1390.6px;top:515.3px;font-size:19.3px;color:#3b4d59;letter-spacing:0.37px">Inspector</span>
<span class="t" style="left:1645px;top:515.3px;font-size:19.3px;color:#3b4d59;letter-spacing:0.32px">Estimator</span>
<!--/TOOLBAR-->
<!--DOCK-->
<svg class="i" style="left:0;top:0" width="1920" height="1247"><defs>
<linearGradient id="dockbg" x1="0" y1="0" x2="1" y2="0">
<stop offset="0" stop-color="#5d8791"/><stop offset="0.05" stop-color="#6a8f95"/><stop offset="0.18" stop-color="#7c9c94"/><stop offset="0.38" stop-color="#84a295"/><stop offset="0.47" stop-color="#7e9688"/><stop offset="0.53" stop-color="#8a918b"/><stop offset="0.6" stop-color="#747875"/><stop offset="0.75" stop-color="#666967"/><stop offset="1" stop-color="#5e6160"/></linearGradient>
<linearGradient id="gFinder" x1="0" y1="0" x2="0" y2="1"><stop offset="0" stop-color="#1fb6fb"/><stop offset="1" stop-color="#1d6ff0"/></linearGradient>
<linearGradient id="gGreen" x1="0" y1="0" x2="0" y2="1"><stop offset="0" stop-color="#5fe06a"/><stop offset="1" stop-color="#2cbf42"/></linearGradient>
<linearGradient id="gBlue" x1="0" y1="0" x2="0" y2="1"><stop offset="0" stop-color="#26a7f8"/><stop offset="1" stop-color="#1a6fe8"/></linearGradient>
<linearGradient id="gMusic" x1="0" y1="0" x2="0" y2="1"><stop offset="0" stop-color="#fb5c74"/><stop offset="1" stop-color="#f0263f"/></linearGradient>
<linearGradient id="gPurple" x1="0" y1="0" x2="1" y2="1"><stop offset="0" stop-color="#5aa0f5"/><stop offset="1" stop-color="#8a6ef0"/></linearGradient>
<linearGradient id="deskg" x1="0" y1="0" x2="1" y2="0"><stop offset="0" stop-color="#3b6a7a"/><stop offset="0.015" stop-color="#2c4b56"/><stop offset="0.04" stop-color="#161c1d"/><stop offset="0.5" stop-color="#1c1f1f"/><stop offset="1" stop-color="#222424"/></linearGradient>
<linearGradient id="deskb" x1="0" y1="0" x2="1" y2="0"><stop offset="0" stop-color="#4a7a88"/><stop offset="0.2" stop-color="#5a8585"/><stop offset="0.42" stop-color="#678a84"/><stop offset="0.44" stop-color="#555a58"/><stop offset="0.7" stop-color="#404242"/><stop offset="1" stop-color="#303232"/></linearGradient>
<linearGradient id="deskl" x1="0" y1="0" x2="1" y2="0"><stop offset="0" stop-color="#557f8a" stop-opacity="1"/><stop offset="0.45" stop-color="#557f8a" stop-opacity="0.9"/><stop offset="1" stop-color="#557f8a" stop-opacity="0"/></linearGradient>
</defs>
<rect x="0" y="1153" width="1920" height="94" fill="url(#deskg)"/>
<rect x="0" y="1238" width="1920" height="9" fill="url(#deskb)"/>
<rect x="0" y="1168" width="80" height="79" fill="url(#deskl)"/>
<path d="M0 1152.8 L1920 1152.8 L1920 1146 Q1920 1158 1907 1158 L13 1158 Q0 1158 0 1146 Z" fill="#969696"/>
<rect x="1" y="1153" width="1918" height="1" fill="#7b7b7b"/>
<rect x="39.2" y="1176" width="1841.3" height="64.7" rx="18" fill="url(#dockbg)" stroke="#a8b8b4" stroke-opacity="0.45" stroke-width="1"/>
<rect x="1147.6" y="1184" width="1.3" height="50" fill="#3f4a46" opacity="0.8"/>
<rect x="1767.4" y="1184" width="1.3" height="50" fill="#2f3030" opacity="0.8"/>
<rect x="47.7" y="1189" width="38" height="38" rx="9" fill="url(#gFinder)"/><path d="M66.7 1189 L76.7 1189 Q85.7 1189 85.7 1198 L85.7 1218 Q85.7 1227 76.7 1227 L66.7 1227 Q63.7 1219 64.7 1211 L60.7 1211 Q61.7 1199 66.7 1189 Z" fill="#d7ecfb"/><path d="M55.7 1215 Q66.7 1222 78.7 1215" stroke="#1b2a3a" stroke-width="1.3" fill="none"/><rect x="57.7" y="1200" width="1.5" height="4" fill="#1b2a3a"/><rect x="73.7" y="1200" width="1.5" height="4" fill="#1b2a3a"/><rect x="97.4" y="1189" width="38" height="38" rx="9" fill="#f4f4f6"/><rect x="103.44" y="1196" width="26" height="6" rx="3" fill="#c9c9cc"/><rect x="104.44" y="1206" width="6" height="6" rx="1.6" fill="#f7962b"/><rect x="113.44" y="1206" width="6" height="6" rx="1.6" fill="#f04bb4"/><rect x="122.44" y="1206" width="6" height="6" rx="1.6" fill="#1ccfae"/><rect x="104.44" y="1215" width="6" height="6" rx="1.6" fill="#b98cf0"/><rect x="113.44" y="1215" width="6" height="6" rx="1.6" fill="#58b6f5"/><rect x="122.44" y="1215" width="6" height="6" rx="1.6" fill="#b4b4b8"/><rect x="147.2" y="1189" width="38" height="38" rx="9" fill="#f4f5f7"/><circle cx="166.18" cy="1208" r="15" fill="#2c8ff2"/><circle cx="166.18" cy="1208" r="12.5" fill="none" stroke="#8cc4fa" stroke-width="1" stroke-dasharray="1 1.5"/><path d="M176.18 1198 L168.18 1210 L164.18 1206 Z" fill="#f03a3a"/><path d="M156.18 1218 L164.18 1206 L168.18 1210 Z" fill="#fff"/><rect x="196.9" y="1189" width="38" height="38" rx="9" fill="url(#gGreen)"/><ellipse cx="215.92000000000002" cy="1206.5" rx="13" ry="10.5" fill="#e9f6e6"/><path d="M205.92000000000002 1212 L203.92000000000002 1218 L210.92000000000002 1215 Z" fill="#e9f6e6"/><rect x="246.7" y="1189" width="38" height="38" rx="9" fill="url(#gBlue)"/><rect x="252.66000000000003" y="1199" width="26" height="18" rx="2" fill="#eaf2fb"/><path d="M252.66000000000003 1200 L265.66 1210 L278.66 1200" stroke="#a9c8ea" stroke-width="1.2" fill="none"/><rect x="296.4" y="1189" width="38" height="38" rx="9" fill="#eef4ea"/><path d="M318.40000000000003 1189 L325.40000000000003 1189 Q334.40000000000003 1189 334.40000000000003 1198 L334.40000000000003 1213 Q324.40000000000003 1213 320.40000000000003 1203 Z" fill="#5ad069"/><rect x="308.40000000000003" y="1189" width="7" height="38" fill="#2f86f0"/><path d="M296.40000000000003 1213 L304.40000000000003 1213 L306.40000000000003 1227 L302.40000000000003 1227 Q296.40000000000003 1227 296.40000000000003 1221 Z" fill="#f3a0bf"/><path d="M322.40000000000003 1227 L328.40000000000003 1219 L334.40000000000003 1221 L334.40000000000003 1227 Z" fill="#f6c530"/><circle cx="311.90000000000003" cy="1211" r="7.5" fill="#2f86f0" stroke="#fff" stroke-width="2"/><path d="M308.90000000000003 1215 L311.90000000000003 1207 L314.90000000000003 1215" stroke="#fff" stroke-width="1.8" fill="none"/><rect x="346.1" y="1189" width="38" height="38" rx="9" fill="#f7f7f8"/><ellipse cx="365.14" cy="1200.5" rx="4.5" ry="7" fill="#f9a825" opacity="0.9" transform="rotate(0 365.14 1208)"/><ellipse cx="365.14" cy="1200.5" rx="4.5" ry="7" fill="#fbd43a" opacity="0.9" transform="rotate(45 365.14 1208)"/><ellipse cx="365.14" cy="1200.5" rx="4.5" ry="7" fill="#7ccd4b" opacity="0.9" transform="rotate(90 365.14 1208)"/><ellipse cx="365.14" cy="1200.5" rx="4.5" ry="7" fill="#34b89b" opacity="0.9" transform="rotate(135 365.14 1208)"/><ellipse cx="365.14" cy="1200.5" rx="4.5" ry="7" fill="#4a8ef2" opacity="0.9" transform="rotate(180 365.14 1208)"/><ellipse cx="365.14" cy="1200.5" rx="4.5" ry="7" fill="#8b6cf0" opacity="0.9" transform="rotate(225 365.14 1208)"/><ellipse cx="365.14" cy="1200.5" rx="4.5" ry="7" fill="#e04fa0" opacity="0.9" transform="rotate(270 365.14 1208)"/><ellipse cx="365.14" cy="1200.5" rx="4.5" ry="7" fill="#f2574a" opacity="0.9" transform="rotate(315 365.14 1208)"/><rect x="395.9" y="1189" width="38" height="38" rx="9" fill="url(#gGreen)"/><rect x="401.88" y="1201" width="18" height="14" rx="3" fill="#eaf6e6"/><path d="M420.88 1206 L427.88 1201 L427.88 1215 L420.88 1210 Z" fill="#eaf6e6"/><rect x="445.6" y="1189" width="38" height="38" rx="9" fill="#f8f8f8"/><text x="464.62" y="1200" font-size="8" font-family="Liberation Sans" fill="#f03a3a" text-anchor="middle">Mon</text><text x="464.62" y="1220" font-size="21" font-family="Liberation Sans" fill="#222" text-anchor="middle">30</text><rect x="495.4" y="1189" width="38" height="38" rx="9" fill="#b9b5ad"/><rect x="527.36" y="1193" width="6" height="10" fill="#3aa9e8"/><rect x="527.36" y="1203" width="6" height="10" fill="#f5a33a"/><rect x="527.36" y="1213" width="6" height="10" fill="#6cc84e"/><circle cx="512.36" cy="1208" r="11" fill="#ededeb"/><circle cx="512.36" cy="1204.5" r="4.2" fill="#9a9690"/><path d="M504.36 1215 Q512.36 1206 520.36 1215" fill="#9a9690"/><rect x="545.1" y="1189" width="38" height="38" rx="9" fill="#f8f8f8"/><circle cx="553.1" cy="1200" r="2.3" fill="#2f86f0"/><rect x="558.1" y="1199.5" width="18" height="1" fill="#ddd"/><circle cx="553.1" cy="1208" r="2.3" fill="#f24b3a"/><rect x="558.1" y="1207.5" width="18" height="1" fill="#ddd"/><circle cx="553.1" cy="1216" r="2.3" fill="#f7a428"/><rect x="558.1" y="1215.5" width="18" height="1" fill="#ddd"/><circle cx="578.1" cy="1193" r="7.5" fill="#ee3b30"/><text x="578.1" y="1196.5" font-size="10" font-family="Liberation Sans" fill="#fff" text-anchor="middle">1</text><rect x="594.8" y="1189" width="38" height="38" rx="9" fill="#f6f6f4"/><path d="M594.84 1198 Q594.84 1189 603.84 1189 L623.84 1189 Q632.84 1189 632.84 1198 L632.84 1199 L594.84 1199 Z" fill="#fbd13e"/><rect x="599.84" y="1207" width="28" height="0.8" fill="#cfcfcf"/><rect x="599.84" y="1214" width="28" height="0.8" fill="#cfcfcf"/><rect x="599.84" y="1221" width="28" height="0.8" fill="#cfcfcf"/><rect x="644.6" y="1189" width="38" height="38" rx="9" fill="#f6f7f8"/><rect x="659.58" y="1195" width="17" height="17" rx="3" fill="#3aa5f5"/><circle cx="659.58" cy="1213" r="8.5" fill="#f0773a"/><path d="M650.58 1213 Q656.58 1199 660.58 1211 Q664.58 1201 668.58 1209 Q671.58 1204 676.58 1207" stroke="#1a3a4a" stroke-width="2" fill="none"/><rect x="694.3" y="1189" width="38" height="38" rx="9" fill="#1c1c1e"/><text x="713.32" y="1214" font-size="15" font-family="Liberation Sans" font-weight="bold" fill="#fff" text-anchor="middle"> tv</text><circle cx="704.32" cy="1209" r="4" fill="#fff"/><rect x="744.1" y="1189" width="38" height="38" rx="9" fill="url(#gMusic)"/><path d="M759.0600000000001 1216 L759.0600000000001 1199 L771.0600000000001 1197 L771.0600000000001 1213" stroke="#fff" stroke-width="2.2" fill="none"/><circle cx="756.5600000000001" cy="1216" r="3.5" fill="#fff"/><circle cx="768.5600000000001" cy="1213.5" r="3.5" fill="#fff"/><rect x="793.8" y="1189" width="38" height="38" rx="9" fill="#f6f6f6"/><path d="M801.8000000000001 1198 L809.8000000000001 1198 L823.8000000000001 1214 L823.8000000000001 1218 L815.8000000000001 1218 L801.8000000000001 1202 Z" fill="#f2485a"/><path d="M801.8000000000001 1204 L807.8000000000001 1211 L807.8000000000001 1218 L801.8000000000001 1218 Z M817.8000000000001 1198 L823.8000000000001 1198 L823.8000000000001 1212 L817.8000000000001 1205 Z" fill="#f2485a" opacity="0.9"/><rect x="843.5" y="1189" width="38" height="38" rx="9" fill="url(#gBlue)"/><rect x="852.5400000000001" y="1197" width="20" height="12" fill="#fff"/><circle cx="862.5400000000001" cy="1203" r="3.5" fill="#f2a33a"/><rect x="861.84" y="1209" width="1.4" height="12" fill="#fff"/><rect x="856.5400000000001" y="1220" width="12" height="1.5" fill="#fff"/><rect x="893.3" y="1189" width="38" height="38" rx="9" fill="url(#gGreen)"/><rect x="901.2800000000001" y="1211" width="4" height="8" rx="1" fill="#fff"/><rect x="907.2800000000001" y="1205" width="4" height="14" rx="1" fill="#fff"/><rect x="913.2800000000001" y="1199" width="4" height="20" rx="1" fill="#fff"/><rect x="919.2800000000001" y="1207" width="4" height="12" rx="1" fill="#fff"/><rect x="943.0" y="1189" width="38" height="38" rx="9" fill="#f79a23"/><path d="M952.0200000000001 1219 L973.0200000000001 1197" stroke="#fff" stroke-width="3.5" stroke-linecap="round"/><rect x="952.0200000000001" y="1221" width="22" height="1" fill="#fff" opacity="0.7"/><rect x="992.8" y="1189" width="38" height="38" rx="9" fill="url(#gBlue)"/><path d="M1005.7600000000001 1218 L1013.7600000000001 1198 M1017.7600000000001 1218 L1009.7600000000001 1198 M1000.7600000000001 1212 L1022.7600000000001 1212" stroke="#fff" stroke-width="2.5" stroke-linecap="round"/><rect x="1042.5" y="1189" width="38" height="38" rx="9" fill="#8e8e90"/><circle cx="1061.5" cy="1208" r="14" fill="#d8d8da"/><circle cx="1061.5" cy="1208" r="11.5" fill="#8c8c8e"/><circle cx="1061.5" cy="1208" r="8" fill="none" stroke="#e0e0e0" stroke-width="2"/><path d="M1061.5 1208 L1061.5 1200 M1061.5 1208 L1054.5 1212 M1061.5 1208 L1068.5 1212" stroke="#e0e0e0" stroke-width="2"/><rect x="1092.2" y="1189" width="38" height="38" rx="9" fill="url(#gPurple)"/><rect x="1103.24" y="1194" width="11" height="26" rx="2.5" fill="#2a3b6a"/><rect x="1108.24" y="1198" width="12" height="25" rx="2.5" fill="#e7ecf8"/><rect x="1165.0" y="1189" width="38" height="38" rx="9" fill="#f4f6f8"/><path d="M1177.0 1199 L1197.0 1199 L1197.0 1217 L1177.0 1217 Z" fill="#4aa3f0"/><path d="M1177.0 1199 L1197.0 1211 L1197.0 1199 Z" fill="#2b7fd8"/><rect x="1170.0" y="1204" width="14" height="14" rx="2.5" fill="#1666c5"/><circle cx="1177.0" cy="1211" r="3.5" fill="none" stroke="#fff" stroke-width="1.8"/><rect x="1214.7" y="1189" width="38" height="38" rx="9" fill="url(#gBlue)"/><rect x="1224.74" y="1197" width="20" height="12" rx="2" fill="#9fd0fa"/><rect x="1220.74" y="1203" width="12" height="16" rx="2" fill="#e6f3fd"/><rect x="1230.74" y="1207" width="18" height="12" rx="3" fill="#cfe7fb"/><rect x="1264.5" y="1189" width="38" height="38" rx="9" fill="#f6f6f6"/><g transform="translate(1283.48 1208)" fill="none" stroke="#1a1a1a" stroke-width="2"><ellipse rx="12" ry="6"/><ellipse rx="12" ry="6" transform="rotate(60)"/><ellipse rx="12" ry="6" transform="rotate(120)"/></g><rect x="1314.2" y="1189" width="38" height="38" rx="9" fill="url(#gGreen)"/><circle cx="1333.22" cy="1207.5" r="12" fill="none" stroke="#fff" stroke-width="2.5"/><path d="M1322.22 1220 L1324.22 1214 L1327.22 1217 Z" fill="#fff"/><path d="M1328.22 1202 Q1329.22 1211 1338.22 1213" stroke="#fff" stroke-width="3.5" fill="none" stroke-linecap="round"/><rect x="1364.0" y="1189" width="38" height="38" rx="9" fill="#f7f8f9"/><path d="M1372.96 1202 L1389.96 1217.5" stroke="#1f6fb8" stroke-width="4.2" stroke-linecap="round"/><path d="M1372.96 1213.5 L1389.96 1198" stroke="#2788d8" stroke-width="4.2" stroke-linecap="round"/><path d="M1388.46 1195.5 L1394.96 1198.5 L1394.96 1217.5 L1388.46 1220.5 Z" fill="#2a9cf4"/><rect x="1413.7" y="1189" width="38" height="38" rx="9" fill="#f7f7f7"/><circle cx="1432.7" cy="1208" r="14" fill="#e8453c"/><path d="M1432.7 1208 L1420.7 1215 A14 14 0 0 0 1437.7 1221 Z" fill="#34a853"/><path d="M1432.7 1208 L1437.7 1221 A14 14 0 0 0 1445.7 1202 Z" fill="#fbbc05"/><circle cx="1432.7" cy="1208" r="6.5" fill="#fff"/><circle cx="1432.7" cy="1208" r="5" fill="#4285f4"/><rect x="1463.4" y="1189" width="38" height="38" rx="9" fill="#f4f6fa"/><rect x="1475.44" y="1196" width="20" height="24" rx="3" fill="#4f8ef5"/><rect x="1468.44" y="1204" width="15" height="15" rx="2.5" fill="#1a4fb0"/><text x="1475.94" y="1216" font-size="10" font-family="Liberation Sans" font-weight="bold" fill="#fff" text-anchor="middle">W</text><rect x="1513.2" y="1189" width="38" height="38" rx="9" fill="#f4f7f4"/><rect x="1525.18" y="1196" width="20" height="24" rx="3" fill="#3fae5a"/><rect x="1518.18" y="1204" width="15" height="15" rx="2.5" fill="#1c6b36"/><text x="1525.68" y="1216" font-size="10" font-family="Liberation Sans" font-weight="bold" fill="#fff" text-anchor="middle">X</text><rect x="1562.9" y="1189" width="38" height="38" rx="9" fill="url(#gBlue)"/><path d="M1571.92 1220 L1586.92 1203" stroke="#1e1e1e" stroke-width="3.5" stroke-linecap="round"/><path d="M1580.92 1199 L1589.92 1196 L1594.92 1202 L1589.92 1206 Z" fill="#333"/><rect x="1612.7" y="1189" width="38" height="38" rx="9" fill="#e0704a"/><g transform="translate(1631.66 1208)" stroke="#fff" stroke-width="2.4" stroke-linecap="round"><path d="M0 -12 L0 12 M-12 0 L12 0 M-8.5 -8.5 L8.5 8.5 M-8.5 8.5 L8.5 -8.5 M-4.6 -11 L4.6 11 M-11 -4.6 L11 4.6 M-11 4.6 L11 -4.6 M-4.6 11 L4.6 -11"/></g><rect x="1662.4" y="1189" width="38" height="38" rx="9" fill="#1e1e1e"/><rect x="1675.4" y="1195" width="6" height="8" rx="3" fill="#f24e1e"/><rect x="1681.4" y="1195" width="6" height="8" rx="3" fill="#ff7262"/><rect x="1675.4" y="1203" width="6" height="8" rx="3" fill="#a259ff"/><circle cx="1684.4" cy="1207" r="3.2" fill="#1abcfe"/><rect x="1675.4" y="1211" width="6" height="8" rx="3" fill="#0acf83"/><rect x="1712.1" y="1189" width="38" height="38" rx="9" fill="#f5f6f8"/><circle cx="1731.1399999999999" cy="1207" r="11" fill="none" stroke="#2a8cf0" stroke-width="5"/><path d="M1735.1399999999999 1211 L1741.1399999999999 1218" stroke="#2a8cf0" stroke-width="5" stroke-linecap="round"/><rect x="1787" y="1193" width="33" height="34" rx="2" fill="#e9f0f6"/><rect x="1790" y="1198" width="27" height="28" fill="#f3ead8"/><rect x="1790" y="1201" width="27" height="0.8" fill="#b9c8d6"/><rect x="1790" y="1205" width="27" height="0.8" fill="#b9c8d6"/><rect x="1790" y="1209" width="27" height="0.8" fill="#b9c8d6"/><rect x="1790" y="1213" width="27" height="0.8" fill="#b9c8d6"/><rect x="1790" y="1217" width="27" height="0.8" fill="#b9c8d6"/><rect x="1790" y="1221" width="27" height="0.8" fill="#b9c8d6"/><rect x="1784" y="1199" width="5" height="24" rx="2" fill="#8fc1ee"/><rect x="1818" y="1199" width="5" height="24" rx="2" fill="#8fc1ee"/><rect x="1797" y="1189" width="14" height="5" fill="#f6f6f6"/><path d="M1837 1195 L1869 1195 L1865 1227 L1841 1227 Z" fill="#c9cbcc"/><rect x="1836" y="1192" width="34" height="5" rx="2" fill="#e2e3e4"/><path d="M1845 1195 Q1852 1187 1860 1192 L1866 1195 Z" fill="#5cb8f0"/>
<circle cx="66.7" cy="1233" r="2.4" fill="#111"/><circle cx="215.9" cy="1233" r="2.4" fill="#111"/><circle cx="365.1" cy="1233" r="2.4" fill="#111"/><circle cx="613.8" cy="1233" r="2.4" fill="#111"/><circle cx="1111.2" cy="1233" r="2.4" fill="#111"/><circle cx="1184.0" cy="1233" r="2.4" fill="#111"/><circle cx="1233.7" cy="1233" r="2.4" fill="#111"/><circle cx="1283.5" cy="1233" r="2.4" fill="#111"/><circle cx="1333.2" cy="1233" r="2.4" fill="#111"/><circle cx="1383.0" cy="1233" r="2.4" fill="#111"/><circle cx="1432.7" cy="1233" r="2.4" fill="#111"/><circle cx="1482.4" cy="1233" r="2.4" fill="#111"/><circle cx="1532.2" cy="1233" r="2.4" fill="#111"/><circle cx="1581.9" cy="1233" r="2.4" fill="#111"/><circle cx="1631.7" cy="1233" r="2.4" fill="#111"/><circle cx="1681.4" cy="1233" r="2.4" fill="#111"/><circle cx="1731.1" cy="1233" r="2.4" fill="#111"/>
</svg>
<!--/DOCK-->
<div class="a" style="left:1703px;top:1023px;width:202px;height:135px;border-radius:8px;box-shadow:0 0 60px 25px rgba(0,0,0,0.045)"></div>
<!--THUMB-->
<svg class="i" style="left:0;top:0" width="1920" height="1247"><defs><filter id="thsh" x="-10%" y="-10%" width="120%" height="120%"><feDropShadow dx="0" dy="0.5" stdDeviation="1.2" flood-opacity="0.25"/></filter><clipPath id="thclip"><rect x="1708" y="1028.6" width="191" height="123.7"/></clipPath></defs><rect x="1702.8" y="1022.8" width="201.9" height="134.6" rx="8" fill="#fff" filter="url(#thsh)"/><g clip-path="url(#thclip)"><rect x="1708.00" y="1028.60" width="191.04" height="123.70" rx="0" fill="#fcfcfd" /><rect x="1708.00" y="1028.60" width="191.04" height="4.07" rx="0" fill="#2a79b6" /><rect x="1708.00" y="1032.67" width="191.04" height="5.06" rx="0" fill="#c9e7bf" /><rect x="1718.85" y="1033.56" width="29.35" height="4.17" rx="0" fill="#fff" /><rect x="1708.00" y="1037.73" width="191.04" height="5.95" rx="0" fill="#fff" /><rect x="1723.22" y="1038.62" width="128.36" height="4.17" rx="1" fill="#e2e2e2" /><rect x="1875.96" y="1038.52" width="22.29" height="4.27" rx="1" fill="#b9ddb0" /><rect x="1708.00" y="1043.68" width="30.35" height="98.70" rx="0" fill="#1b3246" /><rect x="1709.99" y="1054.29" width="26.17" height="5.56" rx="0" fill="#1b3b4e" /><rect x="1711.58" y="1056.38" width="8.96" height="1.19" rx="0" fill="#1ed0b8" /><rect x="1711.58" y="1062.18" width="6.97" height="1.19" rx="0" fill="#7f8f9a" /><rect x="1711.58" y="1067.98" width="6.97" height="1.19" rx="0" fill="#7f8f9a" /><rect x="1711.58" y="1073.79" width="6.97" height="1.19" rx="0" fill="#7f8f9a" /><rect x="1711.58" y="1079.59" width="6.97" height="1.19" rx="0" fill="#7f8f9a" /><rect x="1710.09" y="1046.36" width="4.38" height="4.36" rx="0.6" fill="#fff" /><rect x="1715.56" y="1047.45" width="14.93" height="1.98" rx="0" fill="#c8d0d6" /><rect x="1742.83" y="1046.26" width="9.95" height="1.79" rx="0" fill="#9aa4aa" /><rect x="1754.96" y="1045.96" width="5.57" height="2.18" rx="0" fill="#4a5358" /><rect x="1741.33" y="1051.81" width="18.91" height="4.96" rx="0" fill="#e4efee" /><rect x="1741.33" y="1056.38" width="18.91" height="0.40" rx="0" fill="#10a08e" /><rect x="1763.22" y="1053.60" width="10.95" height="1.39" rx="0" fill="#c0c8cc" /><rect x="1880.83" y="1052.01" width="14.83" height="5.65" rx="0.8" fill="#10a08e" /><rect x="1741.43" y="1070.26" width="10.95" height="1.98" rx="0" fill="#3a4348" /><rect x="1741.43" y="1073.74" width="14.93" height="0.99" rx="0" fill="#c4cacd" /><rect x="1842.82" y="1069.27" width="5.97" height="4.96" rx="0.5" fill="#eef2f5" /><rect x="1849.79" y="1069.27" width="5.97" height="4.96" rx="0.5" fill="#eef2f5" /><rect x="1856.75" y="1069.27" width="5.97" height="4.96" rx="0.5" fill="#dfeeed" /><rect x="1863.72" y="1069.27" width="5.97" height="4.96" rx="0.5" fill="#eef2f5" /><rect x="1741.33" y="1066.30" width="154.22" height="0.10" rx="0" fill="#e5e9f0" /><rect x="1741.23" y="1072.84" width="36.82" height="16.67" rx="0.8" fill="#fff" stroke="#e6eaee" stroke-width="0.4"/><rect x="1743.22" y="1075.32" width="2.49" height="2.48" rx="0.4" fill="#dde6f5" /><rect x="1743.22" y="1079.29" width="9.95" height="0.79" rx="0" fill="#d8dde0" /><rect x="1743.22" y="1081.57" width="5.97" height="1.79" rx="0" fill="#3d464b" /><rect x="1780.63" y="1072.84" width="36.52" height="16.67" rx="0.8" fill="#fff" stroke="#e6eaee" stroke-width="0.4"/><rect x="1782.62" y="1075.32" width="2.49" height="2.48" rx="0.4" fill="#dde6f5" /><rect x="1782.62" y="1079.29" width="9.95" height="0.79" rx="0" fill="#d8dde0" /><rect x="1782.62" y="1081.57" width="5.97" height="1.79" rx="0" fill="#3d464b" /><rect x="1819.94" y="1072.84" width="36.42" height="16.67" rx="0.8" fill="#fff" stroke="#e6eaee" stroke-width="0.4"/><rect x="1821.93" y="1075.32" width="2.49" height="2.48" rx="0.4" fill="#dde6f5" /><rect x="1821.93" y="1079.29" width="9.95" height="0.79" rx="0" fill="#d8dde0" /><rect x="1821.93" y="1081.57" width="5.97" height="1.79" rx="0" fill="#3d464b" /><rect x="1859.24" y="1072.84" width="36.62" height="16.67" rx="0.8" fill="#fff" stroke="#e6eaee" stroke-width="0.4"/><rect x="1861.23" y="1075.32" width="2.49" height="2.48" rx="0.4" fill="#dde6f5" /><rect x="1861.23" y="1079.29" width="9.95" height="0.79" rx="0" fill="#d8dde0" /><rect x="1861.23" y="1081.57" width="5.97" height="1.79" rx="0" fill="#3d464b" /><rect x="1741.23" y="1098.44" width="36.82" height="16.07" rx="0.8" fill="#fff" stroke="#e6eaee" stroke-width="0.4"/><rect x="1743.22" y="1100.92" width="2.49" height="2.48" rx="0.4" fill="#dde6f5" /><rect x="1743.22" y="1104.88" width="9.95" height="0.79" rx="0" fill="#d8dde0" /><rect x="1743.22" y="1107.17" width="5.97" height="1.79" rx="0" fill="#3d464b" /><rect x="1780.63" y="1098.44" width="36.52" height="16.07" rx="0.8" fill="#fff" stroke="#e6eaee" stroke-width="0.4"/><rect x="1782.62" y="1100.92" width="2.49" height="2.48" rx="0.4" fill="#dde6f5" /><rect x="1782.62" y="1104.88" width="9.95" height="0.79" rx="0" fill="#d8dde0" /><rect x="1782.62" y="1107.17" width="5.97" height="1.79" rx="0" fill="#3d464b" /><rect x="1819.94" y="1098.44" width="36.42" height="16.07" rx="0.8" fill="#fff" stroke="#e6eaee" stroke-width="0.4"/><rect x="1821.93" y="1100.92" width="2.49" height="2.48" rx="0.4" fill="#dde6f5" /><rect x="1821.93" y="1104.88" width="9.95" height="0.79" rx="0" fill="#d8dde0" /><rect x="1821.93" y="1107.17" width="5.97" height="1.79" rx="0" fill="#3d464b" /><rect x="1859.24" y="1098.44" width="36.62" height="16.07" rx="0.8" fill="#fff" stroke="#e6eaee" stroke-width="0.4"/><rect x="1861.23" y="1100.92" width="2.49" height="2.48" rx="0.4" fill="#dde6f5" /><rect x="1861.23" y="1104.88" width="9.95" height="0.79" rx="0" fill="#d8dde0" /><rect x="1861.23" y="1107.17" width="5.97" height="1.79" rx="0" fill="#3d464b" /><rect x="1741.43" y="1093.58" width="17.91" height="1.19" rx="0" fill="#9aa3a8" /><rect x="1741.23" y="1118.97" width="75.92" height="25.79" rx="0.8" fill="#fff" stroke="#e6eaee" stroke-width="0.4"/><rect x="1743.22" y="1121.35" width="14.93" height="1.39" rx="0" fill="#8b9498" /><rect x="1819.94" y="1118.97" width="75.92" height="25.79" rx="0.8" fill="#fff" stroke="#e6eaee" stroke-width="0.4"/><rect x="1821.93" y="1121.35" width="14.93" height="1.39" rx="0" fill="#8b9498" /><rect x="1790.59" y="1126.81" width="3.98" height="5.95" rx="0" fill="#14a08e" /><rect x="1708.00" y="1142.38" width="191.04" height="9.92" rx="0" fill="#0d1010" /><rect x="1710.98" y="1143.67" width="183.08" height="7.44" rx="1.5" fill="#5b6e6a" /><rect x="1712.68" y="1144.66" width="3.78" height="4.96" rx="0.5" fill="#2a8cf0" /><rect x="1717.65" y="1144.66" width="3.78" height="4.96" rx="0.5" fill="#eee" /><rect x="1722.63" y="1144.66" width="3.78" height="4.96" rx="0.5" fill="#3a8ef5" /><rect x="1727.60" y="1144.66" width="3.78" height="4.96" rx="0.5" fill="#4cd964" /><rect x="1732.58" y="1144.66" width="3.78" height="4.96" rx="0.5" fill="#2a8cf0" /><rect x="1737.55" y="1144.66" width="3.78" height="4.96" rx="0.5" fill="#6cc" /><rect x="1742.53" y="1144.66" width="3.78" height="4.96" rx="0.5" fill="#f5a" /><rect x="1747.50" y="1144.66" width="3.78" height="4.96" rx="0.5" fill="#4cd964" /><rect x="1752.48" y="1144.66" width="3.78" height="4.96" rx="0.5" fill="#fff" /><rect x="1757.45" y="1144.66" width="3.78" height="4.96" rx="0.5" fill="#bbb" /><rect x="1762.43" y="1144.66" width="3.78" height="4.96" rx="0.5" fill="#fff" /><rect x="1767.40" y="1144.66" width="3.78" height="4.96" rx="0.5" fill="#ffe070" /><rect x="1772.38" y="1144.66" width="3.78" height="4.96" rx="0.5" fill="#eee" /><rect x="1777.35" y="1144.66" width="3.78" height="4.96" rx="0.5" fill="#222" /><rect x="1782.33" y="1144.66" width="3.78" height="4.96" rx="0.5" fill="#f34" /><rect x="1787.30" y="1144.66" width="3.78" height="4.96" rx="0.5" fill="#f56" /><rect x="1792.28" y="1144.66" width="3.78" height="4.96" rx="0.5" fill="#29f" /><rect x="1797.25" y="1144.66" width="3.78" height="4.96" rx="0.5" fill="#4c4" /><rect x="1802.23" y="1144.66" width="3.78" height="4.96" rx="0.5" fill="#fa3" /><rect x="1807.20" y="1144.66" width="3.78" height="4.96" rx="0.5" fill="#29f" /><rect x="1812.18" y="1144.66" width="3.78" height="4.96" rx="0.5" fill="#999" /><rect x="1817.15" y="1144.66" width="3.78" height="4.96" rx="0.5" fill="#88f" /><rect x="1825.61" y="1144.66" width="3.78" height="4.96" rx="0.5" fill="#39f" /><rect x="1830.58" y="1144.66" width="3.78" height="4.96" rx="0.5" fill="#3af" /><rect x="1835.56" y="1144.66" width="3.78" height="4.96" rx="0.5" fill="#eee" /><rect x="1840.53" y="1144.66" width="3.78" height="4.96" rx="0.5" fill="#4c4" /><rect x="1845.51" y="1144.66" width="3.78" height="4.96" rx="0.5" fill="#3af" /><rect x="1850.48" y="1144.66" width="3.78" height="4.96" rx="0.5" fill="#ea4" /><rect x="1855.46" y="1144.66" width="3.78" height="4.96" rx="0.5" fill="#48f" /><rect x="1860.43" y="1144.66" width="3.78" height="4.96" rx="0.5" fill="#3a5" /><rect x="1865.41" y="1144.66" width="3.78" height="4.96" rx="0.5" fill="#29f" /><rect x="1870.38" y="1144.66" width="3.78" height="4.96" rx="0.5" fill="#e76" /><rect x="1875.36" y="1144.66" width="3.78" height="4.96" rx="0.5" fill="#222" /><rect x="1880.33" y="1144.66" width="3.78" height="4.96" rx="0.5" fill="#39f" /><rect x="1888.79" y="1144.66" width="3.78" height="4.96" rx="0.5" fill="#eee" /><rect x="1893.77" y="1144.66" width="3.78" height="4.96" rx="0.5" fill="#ccc" /></g></svg>
<!--/THUMB-->
</body></html>
